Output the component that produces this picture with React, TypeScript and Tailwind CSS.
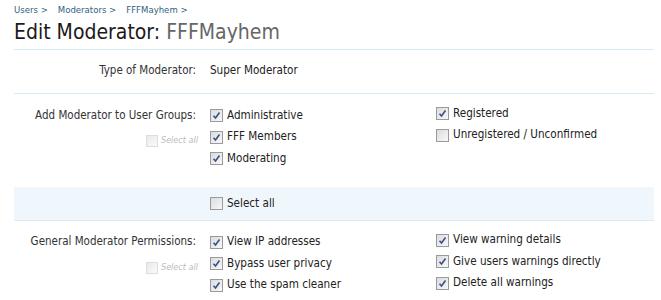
import { ReactNode } from 'react';

const font = { fontFamily: '"DejaVu Sans Condensed", "DejaVu Sans", sans-serif' };

function Box({ checked, faded }: { checked?: boolean; faded?: boolean }) {
  return (
    <span
      className={`inline-flex shrink-0 items-center justify-center border bg-gradient-to-br from-[#dcdcdc] to-[#f8f8f8] ${
        faded ? 'h-[12px] w-[12px] border-[#c8c8c8] opacity-60' : 'h-[13px] w-[13px] border-[#9a9a9a]'
      }`}
    >
      {checked && (
        <svg width="9" height="9" viewBox="0 0 9 9">
          <path d="M1.5 4.8 L3.5 7 L7.5 1.5" fill="none" stroke="#3a4f8a" strokeWidth="1.6" />
        </svg>
      )}
    </span>
  );
}

function Check({ label, checked = true }: { label: string; checked?: boolean }) {
  return (
    <div className="flex h-[21.5px] items-center gap-[4px] text-[11.6px] text-[#222]">
      <Box checked={checked} />
      <span>{label}</span>
    </div>
  );
}

function SelectAllSmall() {
  return (
    <div className="-mr-[2px] mt-[8px] flex items-center justify-end gap-[3px]">
      <Box faded />
      <span className="text-[9px] italic text-[#bbb]">Select all</span>
    </div>
  );
}

function Row({ label, children, extra }: { label: string; children: ReactNode; extra?: ReactNode }) {
  return (
    <div className="flex">
      <div className="w-[182px] shrink-0 text-right">
        <div className="flex h-[21.5px] items-center justify-end text-[11.5px] text-[#333]">{label}</div>
        {extra}
      </div>
      <div className="pl-[14px]">{children}</div>
    </div>
  );
}

export default function App() {
  return (
    <div className="h-[300px] w-[661px] overflow-hidden bg-white pl-[14px] pr-[7px]" style={font}>
      <div className="flex gap-[10px] pt-[3px] text-[9.5px] text-[#2f5f80]">
        <span>Users &gt;</span>
        <span>Moderators &gt;</span>
        <span>FFFMayhem &gt;</span>
      </div>
      <h1 className="mt-[1px] text-[21px] leading-[28px] text-[#1a1a1a]">
        Edit Moderator: <span className="text-[#666]">FFFMayhem</span>
      </h1>
      <div className="mt-[3px] border-b border-[#d7eaf4]" />

      <div className="border-b border-[#d7eaf4] pb-[11px] pt-[10px]">
        <Row label="Type of Moderator:">
          <div className="flex h-[21.5px] items-center text-[11.6px] text-[#222]">Super Moderator</div>
        </Row>
      </div>

      <div className="pb-[18px] pt-[11px]">
        <Row label="Add Moderator to User Groups:" extra={<SelectAllSmall />}>
          <div className="flex">
            <div className="w-[226px]">
              <Check label="Administrative" />
              <Check label="FFF Members" />
              <Check label="Moderating" />
            </div>
            <div className="-mt-[2px]">
              <Check label="Registered" />
              <Check label="Unregistered / Unconfirmed" checked={false} />
            </div>
          </div>
        </Row>
      </div>

      <div className="flex h-[34px] items-center border-b border-[#dcebf4] bg-[#f0f7fc] pl-[196px]">
        <Check label="Select all" checked={false} />
      </div>

      <div className="pt-[10px]">
        <Row label="General Moderator Permissions:" extra={<SelectAllSmall />}>
          <div className="flex">
            <div className="w-[226px]">
              <Check label="View IP addresses" />
              <Check label="Bypass user privacy" />
              <Check label="Use the spam cleaner" />
            </div>
            <div className="-mt-[2px]">
              <Check label="View warning details" />
              <Check label="Give users warnings directly" />
              <Check label="Delete all warnings" />
            </div>
          </div>
        </Row>
      </div>
    </div>
  );
}
